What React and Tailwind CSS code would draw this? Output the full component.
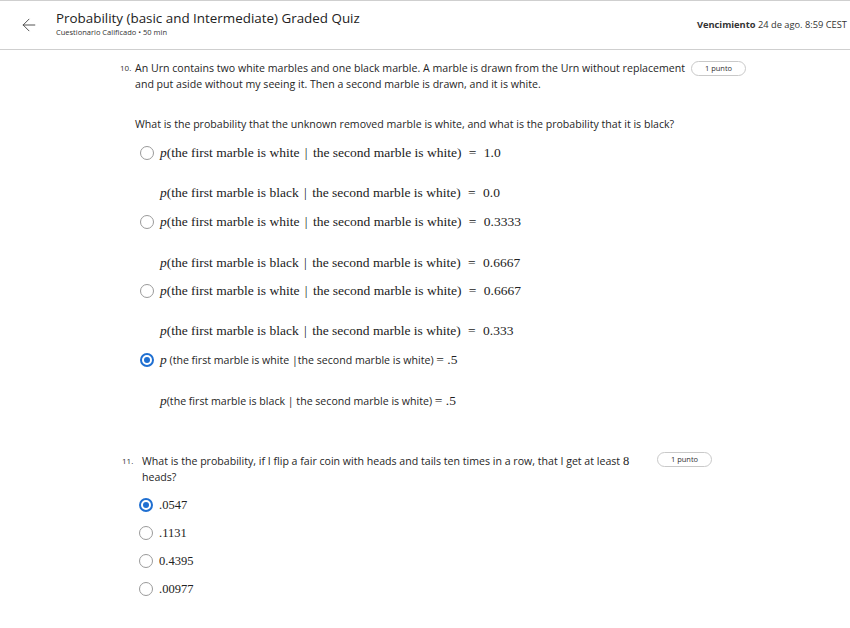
import { ArrowLeft } from 'lucide-react';

const sans = { fontFamily: '"Open Sans", "Noto Sans", sans-serif' };

function Radio({ checked }) {
  if (checked) {
    return (
      <span className="w-[14px] h-[14px] rounded-full border-[2px] border-[#1f6fd1] flex items-center justify-center shrink-0">
        <span className="w-[6px] h-[6px] rounded-full bg-[#1f6fd1]" />
      </span>
    );
  }
  return <span className="w-[14px] h-[14px] rounded-full border border-[#9a9a9a] shrink-0" />;
}

function MathLine({ first, value }) {
  return (
    <span className="font-['Liberation_Serif',serif] text-[13.5px] text-[#222] whitespace-nowrap">
      <i>p</i>(the first marble is {first} <span className="mx-[2px]">|</span> the second marble is white) <span className="mx-[4px]">=</span> {value}
    </span>
  );
}

function Option({ radio, checked, children, className = '' }) {
  return (
    <div className={`flex items-center h-[20px] ${className}`}>
      <span className="w-[26px] flex justify-start pl-[6px]">{radio ? <Radio checked={checked} /> : null}</span>
      {children}
    </div>
  );
}

function Badge() {
  return (
    <span className="flex items-center justify-center w-[55px] h-[15px] rounded-full border border-[#c9c9c9] text-[7.5px] text-[#333]">
      1 punto
    </span>
  );
}

export default function App() {
  return (
    <div className="w-[850px] h-[628px] bg-white text-[#1f1f1f] overflow-hidden" style={sans}>
      {/* Header */}
      <header className="h-[50px] border-t border-b border-[#cfcfcf] flex items-center justify-between pr-[3px]">
        <div className="flex items-center">
          <ArrowLeft className="w-[20px] h-[20px] ml-[19px] mr-[17px] text-[#444]" strokeWidth={1.1} />
          <div className="-mt-[4px]">
            <h1 className="text-[13.4px] leading-[18px] text-[#222]">Probability (basic and Intermediate) Graded Quiz</h1>
            <p className="text-[7.5px] leading-[10px] text-[#333]">Cuestionario Calificado • 50 min</p>
          </div>
        </div>
        <div className="text-[9.3px] text-[#333]">
          <span className="font-bold">Vencimiento</span> 24 de ago. 8:59 CEST
        </div>
      </header>

      {/* Question 10 */}
      <section className="pl-[120px] pt-[10px]">
        <div className="flex items-start">
          <span className="w-[15px] text-[8px] leading-[16px] text-[#333]">10.</span>
          <p className="w-[556px] text-[10.6px] leading-[16px]">
            An Urn contains two white marbles and one black marble. A marble is drawn from the Urn without replacement and put aside without my seeing it. Then a second marble is drawn, and it is white.
          </p>
          <span className="mt-[1px]"><Badge /></span>
        </div>
        <p className="ml-[15px] mt-[24px] text-[10.6px] leading-[16px]">
          What is the probability that the unknown removed marble is white, and what is the probability that it is black?
        </p>

        <div className="ml-[14px] mt-[11px]">
          <Option radio><MathLine first="white" value="1.0" /></Option>
          <Option className="mt-[20px]"><MathLine first="black" value="0.0" /></Option>
          <Option radio className="mt-[9px]"><MathLine first="white" value="0.3333" /></Option>
          <Option className="mt-[21px]"><MathLine first="black" value="0.6667" /></Option>
          <Option radio className="mt-[8px]"><MathLine first="white" value="0.6667" /></Option>
          <Option className="mt-[20px]"><MathLine first="black" value="0.333" /></Option>
          <Option radio checked className="mt-[9px]">
            <span className="text-[10.6px] whitespace-nowrap">
              <i className="font-['Liberation_Serif',serif] text-[13.5px]">p</i> (the first marble is white |the second marble is white) <span className="font-['Liberation_Serif',serif] text-[13.5px]">= .5</span>
            </span>
          </Option>
          <Option className="mt-[21px]">
            <span className="text-[10.6px] whitespace-nowrap">
              <i className="font-['Liberation_Serif',serif] text-[13.5px]">p</i>(the first marble is black | the second marble is white) <span className="font-['Liberation_Serif',serif] text-[13.5px]">= .5</span>
            </span>
          </Option>
        </div>
      </section>

      {/* Question 11 */}
      <section className="pl-[120px] mt-[42px]">
        <div className="flex items-start">
          <span className="w-[22px] text-[8px] leading-[16px] text-[#333] pl-[2px]">11.</span>
          <p className="w-[500px] mr-[15px] text-[10.6px] leading-[16px]">
            What is the probability, if I flip a fair coin with heads and tails ten times in a row, that I get at least <span className="font-['Liberation_Serif',serif] text-[12.5px]">8</span> heads?
          </p>
          <span className="-mt-[1px]"><Badge /></span>
        </div>
        <div className="ml-[13px] mt-[10px] flex flex-col gap-[8px] font-['Liberation_Serif',serif] text-[12.5px] text-[#222]">
          <Option radio checked>.0547</Option>
          <Option radio>.1131</Option>
          <Option radio>0.4395</Option>
          <Option radio>.00977</Option>
        </div>
      </section>
    </div>
  );
}
